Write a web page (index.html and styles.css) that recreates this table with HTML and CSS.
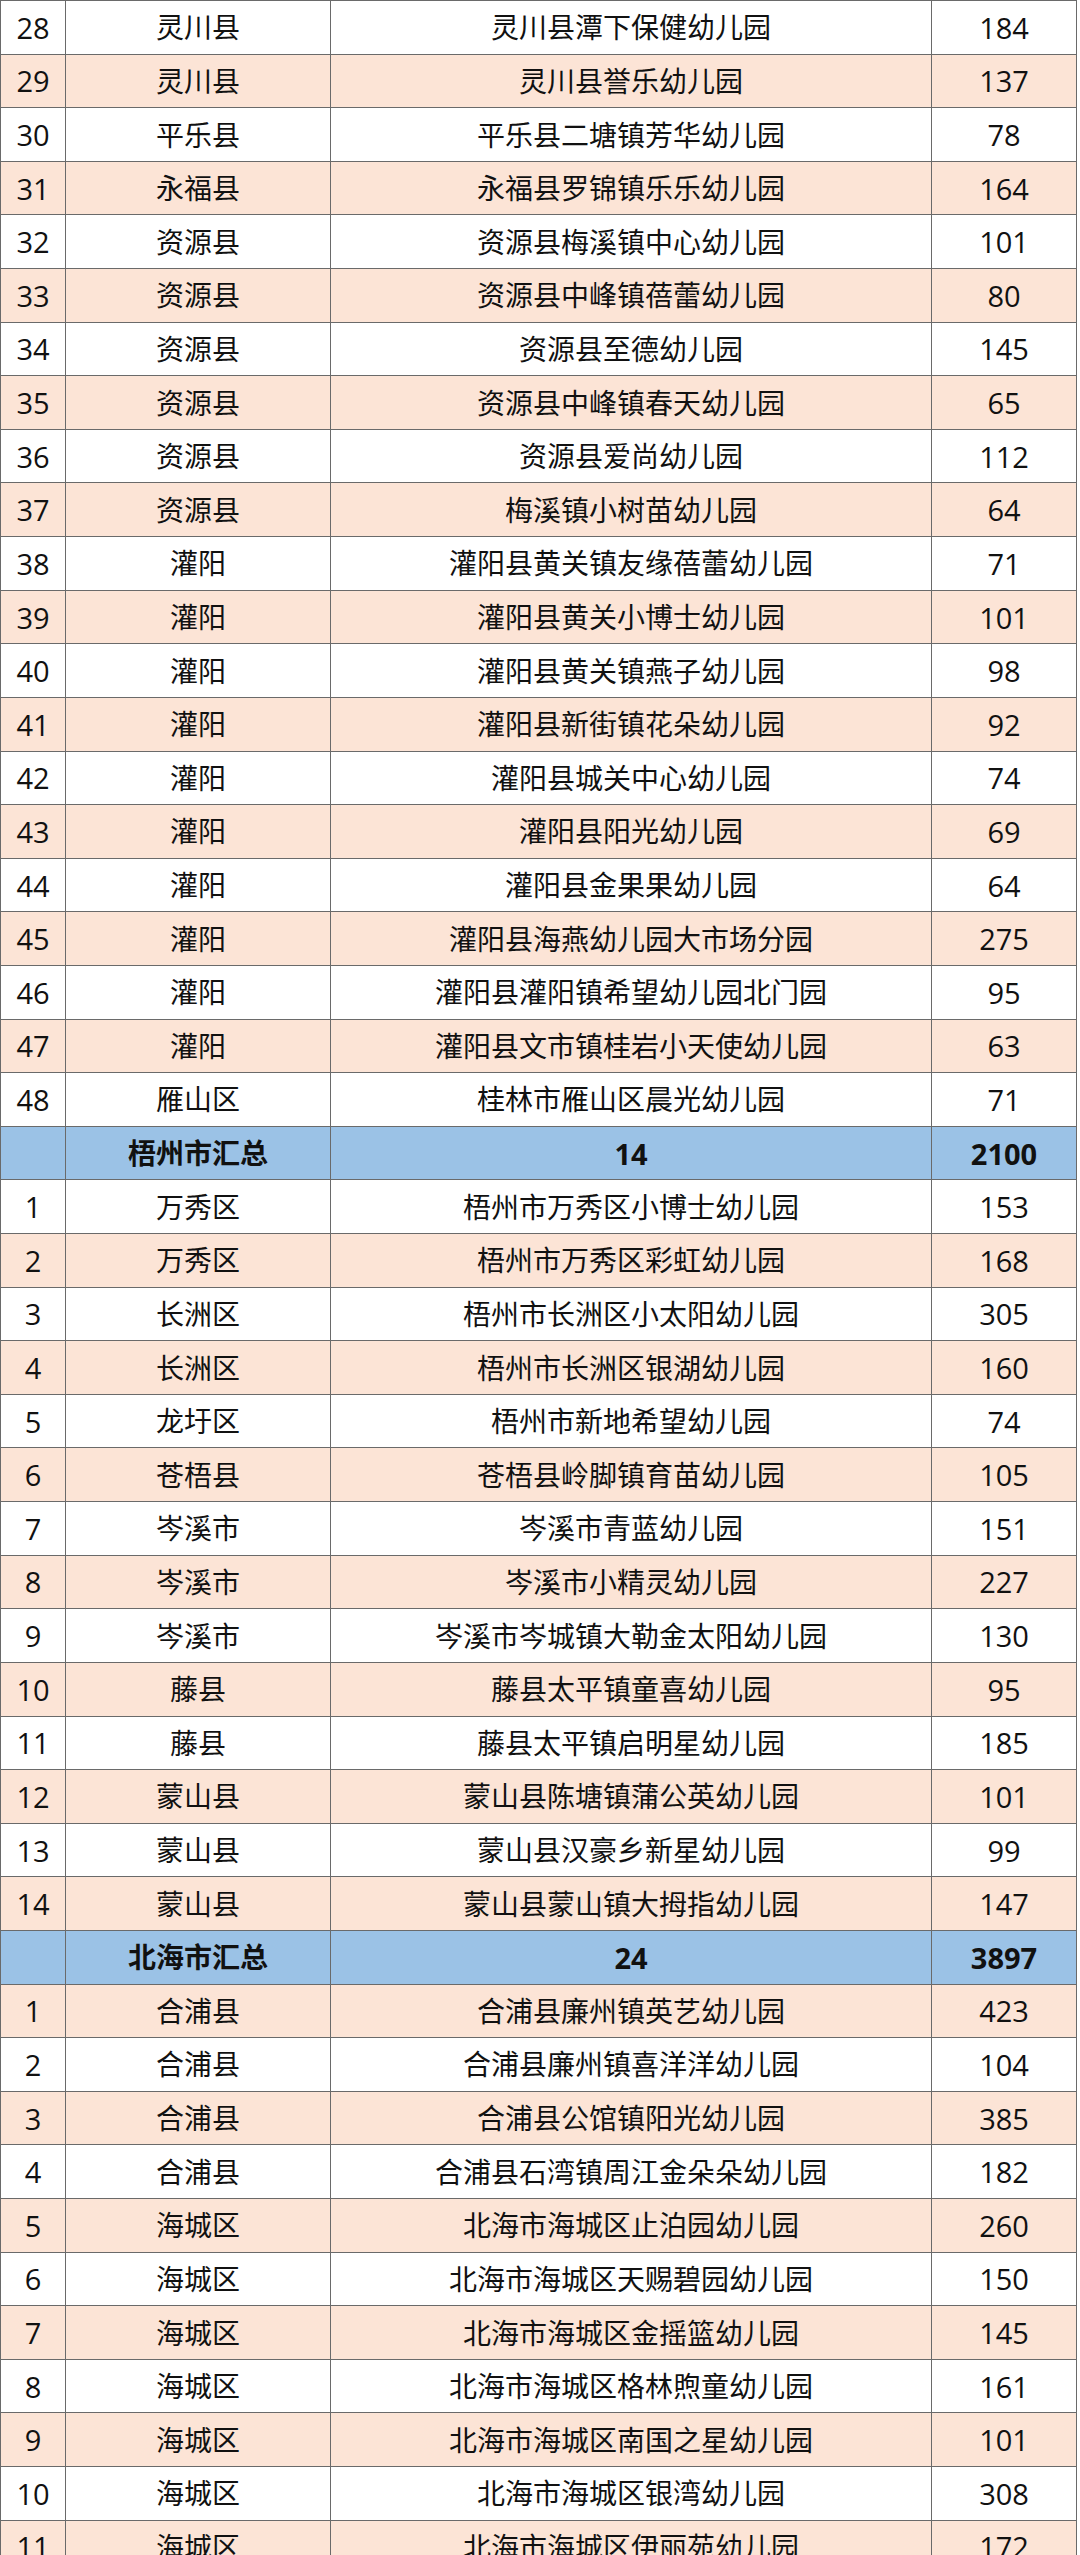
FILE: index.html
```html
<!DOCTYPE html>
<html lang="zh-CN">
<head>
<meta charset="utf-8">
<title>幼儿园名单</title>
<link rel="stylesheet" href="styles.css">
</head>
<body>
<table class="sheet">
<colgroup><col class="c1"><col class="c2"><col class="c3"><col class="c4"></colgroup>
<tbody>
<tr class="w"><td class="n">28</td><td>灵川县</td><td>灵川县潭下保健幼儿园</td><td class="n">184</td></tr>
<tr class="p"><td class="n">29</td><td>灵川县</td><td>灵川县誉乐幼儿园</td><td class="n">137</td></tr>
<tr class="w"><td class="n">30</td><td>平乐县</td><td>平乐县二塘镇芳华幼儿园</td><td class="n">78</td></tr>
<tr class="p"><td class="n">31</td><td>永福县</td><td>永福县罗锦镇乐乐幼儿园</td><td class="n">164</td></tr>
<tr class="w"><td class="n">32</td><td>资源县</td><td>资源县梅溪镇中心幼儿园</td><td class="n">101</td></tr>
<tr class="p"><td class="n">33</td><td>资源县</td><td>资源县中峰镇蓓蕾幼儿园</td><td class="n">80</td></tr>
<tr class="w"><td class="n">34</td><td>资源县</td><td>资源县至德幼儿园</td><td class="n">145</td></tr>
<tr class="p"><td class="n">35</td><td>资源县</td><td>资源县中峰镇春天幼儿园</td><td class="n">65</td></tr>
<tr class="w"><td class="n">36</td><td>资源县</td><td>资源县爱尚幼儿园</td><td class="n">112</td></tr>
<tr class="p"><td class="n">37</td><td>资源县</td><td>梅溪镇小树苗幼儿园</td><td class="n">64</td></tr>
<tr class="w"><td class="n">38</td><td>灌阳</td><td>灌阳县黄关镇友缘蓓蕾幼儿园</td><td class="n">71</td></tr>
<tr class="p"><td class="n">39</td><td>灌阳</td><td>灌阳县黄关小博士幼儿园</td><td class="n">101</td></tr>
<tr class="w"><td class="n">40</td><td>灌阳</td><td>灌阳县黄关镇燕子幼儿园</td><td class="n">98</td></tr>
<tr class="p"><td class="n">41</td><td>灌阳</td><td>灌阳县新街镇花朵幼儿园</td><td class="n">92</td></tr>
<tr class="w"><td class="n">42</td><td>灌阳</td><td>灌阳县城关中心幼儿园</td><td class="n">74</td></tr>
<tr class="p"><td class="n">43</td><td>灌阳</td><td>灌阳县阳光幼儿园</td><td class="n">69</td></tr>
<tr class="w"><td class="n">44</td><td>灌阳</td><td>灌阳县金果果幼儿园</td><td class="n">64</td></tr>
<tr class="p"><td class="n">45</td><td>灌阳</td><td>灌阳县海燕幼儿园大市场分园</td><td class="n">275</td></tr>
<tr class="w"><td class="n">46</td><td>灌阳</td><td>灌阳县灌阳镇希望幼儿园北门园</td><td class="n">95</td></tr>
<tr class="p"><td class="n">47</td><td>灌阳</td><td>灌阳县文市镇桂岩小天使幼儿园</td><td class="n">63</td></tr>
<tr class="w"><td class="n">48</td><td>雁山区</td><td>桂林市雁山区晨光幼儿园</td><td class="n">71</td></tr>
<tr class="s"><td></td><td>梧州市汇总</td><td class="n">14</td><td class="n">2100</td></tr>
<tr class="w"><td class="n">1</td><td>万秀区</td><td>梧州市万秀区小博士幼儿园</td><td class="n">153</td></tr>
<tr class="p"><td class="n">2</td><td>万秀区</td><td>梧州市万秀区彩虹幼儿园</td><td class="n">168</td></tr>
<tr class="w"><td class="n">3</td><td>长洲区</td><td>梧州市长洲区小太阳幼儿园</td><td class="n">305</td></tr>
<tr class="p"><td class="n">4</td><td>长洲区</td><td>梧州市长洲区银湖幼儿园</td><td class="n">160</td></tr>
<tr class="w"><td class="n">5</td><td>龙圩区</td><td>梧州市新地希望幼儿园</td><td class="n">74</td></tr>
<tr class="p"><td class="n">6</td><td>苍梧县</td><td>苍梧县岭脚镇育苗幼儿园</td><td class="n">105</td></tr>
<tr class="w"><td class="n">7</td><td>岑溪市</td><td>岑溪市青蓝幼儿园</td><td class="n">151</td></tr>
<tr class="p"><td class="n">8</td><td>岑溪市</td><td>岑溪市小精灵幼儿园</td><td class="n">227</td></tr>
<tr class="w"><td class="n">9</td><td>岑溪市</td><td>岑溪市岑城镇大勒金太阳幼儿园</td><td class="n">130</td></tr>
<tr class="p"><td class="n">10</td><td>藤县</td><td>藤县太平镇童喜幼儿园</td><td class="n">95</td></tr>
<tr class="w"><td class="n">11</td><td>藤县</td><td>藤县太平镇启明星幼儿园</td><td class="n">185</td></tr>
<tr class="p"><td class="n">12</td><td>蒙山县</td><td>蒙山县陈塘镇蒲公英幼儿园</td><td class="n">101</td></tr>
<tr class="w"><td class="n">13</td><td>蒙山县</td><td>蒙山县汉豪乡新星幼儿园</td><td class="n">99</td></tr>
<tr class="p"><td class="n">14</td><td>蒙山县</td><td>蒙山县蒙山镇大拇指幼儿园</td><td class="n">147</td></tr>
<tr class="s"><td></td><td>北海市汇总</td><td class="n">24</td><td class="n">3897</td></tr>
<tr class="p"><td class="n">1</td><td>合浦县</td><td>合浦县廉州镇英艺幼儿园</td><td class="n">423</td></tr>
<tr class="w"><td class="n">2</td><td>合浦县</td><td>合浦县廉州镇喜洋洋幼儿园</td><td class="n">104</td></tr>
<tr class="p"><td class="n">3</td><td>合浦县</td><td>合浦县公馆镇阳光幼儿园</td><td class="n">385</td></tr>
<tr class="w"><td class="n">4</td><td>合浦县</td><td>合浦县石湾镇周江金朵朵幼儿园</td><td class="n">182</td></tr>
<tr class="p"><td class="n">5</td><td>海城区</td><td>北海市海城区止泊园幼儿园</td><td class="n">260</td></tr>
<tr class="w"><td class="n">6</td><td>海城区</td><td>北海市海城区天赐碧园幼儿园</td><td class="n">150</td></tr>
<tr class="p"><td class="n">7</td><td>海城区</td><td>北海市海城区金摇篮幼儿园</td><td class="n">145</td></tr>
<tr class="w"><td class="n">8</td><td>海城区</td><td>北海市海城区格林煦童幼儿园</td><td class="n">161</td></tr>
<tr class="p"><td class="n">9</td><td>海城区</td><td>北海市海城区南国之星幼儿园</td><td class="n">101</td></tr>
<tr class="w"><td class="n">10</td><td>海城区</td><td>北海市海城区银湾幼儿园</td><td class="n">308</td></tr>
<tr class="p"><td class="n">11</td><td>海城区</td><td>北海市海城区伊丽苑幼儿园</td><td class="n">172</td></tr>
</tbody>
</table>
</body>
</html>
```
FILE: styles.css
```css
html, body {
  margin: 0;
  padding: 0;
  background: #ffffff;
}
body {
  font-family: "Open Sans", "Noto Sans CJK SC", sans-serif;
  color: #111111;
}
.sheet {
  border-collapse: collapse;
  table-layout: fixed;
  width: 1076px;
}
.c1 { width: 65px; }
.c2 { width: 265px; }
.c3 { width: 601px; }
.c4 { width: 145px; }
.sheet tr {
  height: 53.62px;
}
.sheet td {
  border: 1px solid #6a6a6a;
  padding: 0;
  text-align: center;
  vertical-align: middle;
  font-size: 28px;
  line-height: 1;
  white-space: nowrap;
  overflow: hidden;
}
.sheet td.n {
  font-size: 29px;
}
.w { background: #ffffff; }
.p { background: #fce4d6; }
.s { background: #9bc2e6; }
.s td { font-weight: 700; }
```
